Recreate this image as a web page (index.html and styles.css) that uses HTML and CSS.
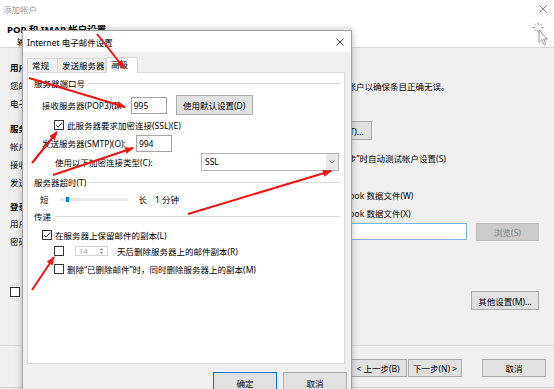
FILE: index.html
```html
<!DOCTYPE html>
<html lang="zh-CN">
<head>
    <meta charset="UTF-8">
    <meta name="viewport" content="width=device-width, initial-scale=1.0">
    <title>添加帐户</title>
    <link rel="stylesheet" href="styles.css">
</head>
<body>
    <div class="window">
        <div class="header">
            <div class="win-title">
                <span>添加帐户</span>
                <svg class="win-close" width="8" height="8" viewBox="0 0 8 8"><path d="M0.5 0.5 L7.5 7.5 M7.5 0.5 L0.5 7.5" stroke="#8a8a8a" stroke-width="1"/></svg>
            </div>
            <h1>POP 和 IMAP 帐户设置</h1>
            <p class="subtitle">输入帐户的邮件服务器设置。</p>
            <svg class="busy-cursor" width="16" height="24" viewBox="0 0 16 24">
                <g stroke="#9a9a9a" stroke-width="1">
                    <path d="M6 0.5 V3 M6 8 V10.5 M0.5 5.5 H3 M9 5.5 H11.5 M2.2 1.7 L3.9 3.4 M8.1 7.6 L9.8 9.3 M9.8 1.7 L8.1 3.4 M3.9 7.6 L2.2 9.3"/>
                </g>
                <path d="M7 8 L7 20.5 L9.8 17.8 L12 22.6 L13.8 21.8 L11.6 17.1 L15.3 17.1 Z" fill="#fff" stroke="#8a8a8a" stroke-width="0.9"/>
            </svg>
        </div>

        <div class="content">
            <div class="col-left">
                <div class="sec-title">用户信息</div>
                <div class="row">您的姓名(Y):</div>
                <div class="row">电子邮件地址(E):</div>
                <div class="sec-title gap">服务器信息</div>
                <div class="row">帐户类型(A):</div>
                <div class="row">接收邮件服务器(I):</div>
                <div class="row">发送邮件服务器(SMTP)(O):</div>
                <div class="sec-title gap short">登录信息</div>
                <div class="row">用户名(U):</div>
                <div class="row">密码(P):</div>
                <div class="row check-row remember">
                    <span class="cb"></span>
                    <span class="cb-label">记住密码(R)</span>
                </div>
            </div>

            <div class="col-right">
                <div class="sec-title">测试帐户设置</div>
                <div class="row hint">建议您测试您的帐户以确保条目正确无误。</div>
                <button class="btn test-btn">测试帐户设置(T)...</button>
                <div class="row check-row auto-test">
                    <span class="cb checked"><svg width="8" height="8" viewBox="0 0 8 8"><path d="M1 4.2 L3.1 6.2 L7 1.6" fill="none" stroke="#222" stroke-width="1"/></svg></span>
                    <span class="cb-label">单击“下一步”时自动测试帐户设置(S)</span>
                </div>
                <div class="row">将新邮件传递到:</div>
                <div class="row radio-row first">
                    <span class="radio"></span>
                    <span class="cb-label">新的 Outlook 数据文件(W)</span>
                </div>
                <div class="row radio-row">
                    <span class="radio"></span>
                    <span class="cb-label">现有 Outlook 数据文件(X)</span>
                </div>
                <div class="file-row">
                    <span class="file-input"></span>
                    <button class="btn disabled browse-btn">浏览(S)</button>
                </div>
                <button class="btn more-btn">其他设置(M)...</button>
            </div>
        </div>

        <div class="footer">
            <button class="btn back-btn">&lt; 上一步(B)</button>
            <button class="btn next-btn">下一步(N) &gt;</button>
            <button class="btn cancel-btn">取消</button>
        </div>
    </div>

    <div class="dialog">
        <div class="dlg-title">
            <span>Internet 电子邮件设置</span>
            <svg width="8" height="8" viewBox="0 0 8 8"><path d="M0.5 0.5 L7.5 7.5 M7.5 0.5 L0.5 7.5" stroke="#333" stroke-width="0.9"/></svg>
        </div>
        <div class="dlg-body">
            <div class="tabs">
                <div class="tab tab-general">常规</div>
                <div class="tab tab-outgoing">发送服务器</div>
                <div class="tab tab-advanced active">高级</div>
            </div>
            <div class="panel">
                <div class="group g-ports"><span>服务器端口号</span><i></i></div>

                <div class="prow pop-row">
                    <span>接收服务器(POP3)(I):</span>
                    <span class="field">995</span>
                    <button class="btn default-btn">使用默认设置(D)</button>
                </div>
                <div class="prow ssl-row">
                    <span class="cb checked"><svg width="8" height="8" viewBox="0 0 8 8"><path d="M1 4.2 L3.1 6.2 L7 1.6" fill="none" stroke="#222" stroke-width="1"/></svg></span>
                    <span class="cb-label">此服务器要求加密连接(SSL)(E)</span>
                </div>
                <div class="prow smtp-row">
                    <span>发送服务器(SMTP)(O):</span>
                    <span class="field">994</span>
                </div>
                <div class="prow enc-row">
                    <span>使用以下加密连接类型(C):</span>
                    <span class="select">
                        <span class="select-value">SSL</span>
                        <span class="select-arrow"><svg width="6" height="4" viewBox="0 0 6 4"><path d="M0.5 0.8 L3 3.2 L5.5 0.8" fill="none" stroke="#666" stroke-width="0.8"/></svg></span>
                    </span>
                </div>

                <div class="group g-timeout"><span>服务器超时(T)</span><i></i></div>
                <div class="prow slider-row">
                    <span>短</span>
                    <span class="track"><span class="thumb"></span></span>
                    <span class="long">长</span>
                    <span class="minutes">1 分钟</span>
                </div>

                <div class="group g-delivery"><span>传递</span><i></i></div>
                <div class="prow keep-row">
                    <span class="cb checked"><svg width="8" height="8" viewBox="0 0 8 8"><path d="M1 4.2 L3.1 6.2 L7 1.6" fill="none" stroke="#222" stroke-width="1"/></svg></span>
                    <span class="cb-label">在服务器上保留邮件的副本(L)</span>
                </div>
                <div class="prow remove-row">
                    <span class="cb"></span>
                    <span class="spinner">
                        <span>14</span>
                        <svg width="5" height="8" viewBox="0 0 5 8"><path d="M0.5 3 L2.5 1 L4.5 3 Z M0.5 5 L2.5 7 L4.5 5 Z" fill="#9a9a9a"/></svg>
                    </span>
                    <span class="days-label">天后删除服务器上的邮件副本(R)</span>
                </div>
                <div class="prow delete-row">
                    <span class="cb"></span>
                    <span class="cb-label">删除“已删除邮件”时，同时删除服务器上的副本(M)</span>
                </div>
            </div>
            <div class="dlg-buttons">
                <button class="btn dlg-btn primary">确定</button>
                <button class="btn dlg-btn">取消</button>
            </div>
        </div>
    </div>

    <!-- red annotation arrows drawn over the screenshot -->
    <svg class="arrows" width="554" height="389" viewBox="0 0 554 389">
        <defs>
            <marker id="head" markerWidth="9" markerHeight="7" refX="8" refY="3.5" orient="auto" markerUnits="userSpaceOnUse">
                <path d="M0 0 L9 3.5 L0 7 Z" fill="#f01414"/>
            </marker>
        </defs>
        <g stroke="#f01414" stroke-width="2" marker-end="url(#head)">
            <line x1="97" y1="34" x2="124" y2="68"/>
            <line x1="29" y1="78" x2="125" y2="107"/>
            <line x1="32" y1="163" x2="57" y2="132"/>
            <line x1="53" y1="175" x2="133" y2="148"/>
            <line x1="188" y1="214" x2="331" y2="171"/>
            <line x1="32" y1="290" x2="54" y2="257"/>
        </g>
    </svg>
</body>
</html>
```

FILE: styles.css
```css
body {
    margin: 0;
    width: 554px;
    height: 389px;
    overflow: hidden;
    position: relative;
    background-color: #f0f0f0;
    font-family: "Noto Sans", "Noto Sans CJK SC", sans-serif;
    font-size: 8.5px;
    color: #000;
}
button {
    font-family: inherit;
    font-size: 8.5px;
    color: #000;
}
.btn {
    background-color: #e1e1e1;
    border: 1px solid #adadad;
    padding: 0;
    margin: 0;
    white-space: nowrap;
}
.btn.disabled {
    background-color: #cccccc;
    border-color: #bfbfbf;
    color: #838383;
}

/* background window: 添加帐户 */
.window {
    width: 554px;
    height: 389px;
}
.header {
    position: relative;
    height: 47px;
    background-color: #ffffff;
    border-bottom: 1px solid #d6d6d6;
}
.win-title {
    display: flex;
    justify-content: space-between;
    align-items: center;
    height: 17px;
    padding: 0 7px 0 3px;
    color: #9a9a9a;
}
.header h1 {
    margin: 7px 0 0 7px;
    font-size: 9.5px;
    line-height: 12px;
    font-weight: bold;
}
.subtitle {
    margin: 0 0 0 17px;
    line-height: 12px;
}
.busy-cursor {
    position: absolute;
    right: 6px;
    top: 22px;
}
.content {
    display: flex;
    height: 297px;
    padding: 0 14px 0 10px;
}
.col-left {
    width: 278px;
    padding-top: 11px;
}
.col-right {
    flex: 1;
    display: flex;
    flex-direction: column;
    align-items: flex-start;
    padding-top: 11px;
}
.sec-title {
    height: 18px;
    line-height: 18px;
    font-weight: bold;
    white-space: nowrap;
}
.sec-title.gap {
    margin-top: 7px;
}
.sec-title.short {
    height: 16px;
    line-height: 16px;
}
.row {
    height: 18px;
    line-height: 18px;
    white-space: nowrap;
}
.check-row,
.radio-row {
    display: flex;
    align-items: center;
}
.remember {
    margin-top: 32px;
}
.cb {
    display: inline-flex;
    align-items: center;
    justify-content: center;
    box-sizing: border-box;
    width: 10px;
    height: 10px;
    border: 1px solid #333;
    background-color: #fff;
    flex: none;
}
.cb-label {
    margin-left: 3px;
    white-space: nowrap;
}
.radio {
    box-sizing: border-box;
    width: 10px;
    height: 10px;
    border: 1px solid #333;
    border-radius: 50%;
    background-color: #fff;
}
.hint {
    margin-top: 1px;
}
.test-btn {
    margin-top: 25px;
    height: 19px;
    padding: 0 7px;
}
.auto-test {
    margin-top: 10px;
    margin-left: 10px;
}
.radio-row {
    margin-left: 12px;
}
.radio-row.first {
    margin-top: 1px;
}
.file-row {
    display: flex;
    align-items: flex-start;
    margin-left: 12px;
}
.file-input {
    box-sizing: border-box;
    width: 167px;
    height: 17px;
    border: 1px solid #7eb4ea;
    background-color: #fff;
}
.browse-btn {
    width: 63px;
    height: 18px;
    margin-left: 9px;
}
.more-btn {
    align-self: flex-end;
    width: 68px;
    height: 19px;
    margin-top: 50px;
    margin-right: 1px;
}
.footer {
    display: flex;
    box-sizing: border-box;
    height: 43px;
    padding: 13px 8px 0 0;
    justify-content: flex-end;
    align-items: flex-start;
    border-top: 1px solid #dcdcdc;
    border-bottom: 1px solid #cfcfcf;
}
.footer .btn {
    height: 18px;
}
.back-btn {
    width: 58px;
}
.next-btn {
    width: 54px;
    margin-left: 1px;
}
.cancel-btn {
    width: 64px;
    margin-left: 20px;
}

/* foreground dialog: Internet 电子邮件设置 */
.dialog {
    position: absolute;
    left: 22px;
    top: 30px;
    width: 328px;
    height: 380px;
    border: 1px solid #a3a3a3;
    background-color: #f0f0f0;
    box-shadow: 0 0 7px rgba(0, 0, 0, 0.28);
}
.dlg-title {
    display: flex;
    justify-content: space-between;
    align-items: center;
    height: 21px;
    padding: 0 7px 0 4px;
    background-color: #fff;
}
.dlg-body {
    padding: 5px 6px 0 4px;
}
.tabs {
    display: flex;
    align-items: flex-end;
    height: 15px;
}
.tab {
    box-sizing: border-box;
    height: 14px;
    line-height: 13px;
    padding-left: 4px;
    border: 1px solid #d9d9d9;
    border-bottom: none;
    background-color: #f0f0f0;
    white-space: nowrap;
}
.tab + .tab {
    border-left: none;
}
.tab-general {
    width: 31px;
}
.tab-outgoing {
    width: 48px;
}
.tab-advanced {
    width: 32px;
}
.tab.active {
    height: 16px;
    margin-bottom: -1px;
    position: relative;
    background-color: #fff;
    border-left: 1px solid #d9d9d9;
}
.panel {
    height: 290px;
    border: 1px solid #d9d9d9;
    background-color: #fff;
}
.group {
    display: flex;
    align-items: center;
    height: 14px;
    padding: 0 4px 0 6px;
    white-space: nowrap;
}
.group i {
    flex: 1;
    height: 1px;
    margin-left: 3px;
    background-color: #dcdcdc;
}
.g-ports {
    margin-top: 3px;
}
.g-timeout {
    margin-top: 4px;
}
.g-delivery {
    margin-top: 3px;
}
.prow {
    display: flex;
    align-items: center;
    white-space: nowrap;
}
.field {
    box-sizing: border-box;
    width: 36px;
    height: 17px;
    line-height: 15px;
    margin-left: 9px;
    padding-left: 2px;
    border: 1px solid #a5a5a5;
    background-color: #fff;
}
.pop-row {
    height: 20px;
    margin-top: 5px;
    padding-left: 14px;
}
.default-btn {
    width: 77px;
    height: 20px;
    margin-left: 9px;
}
.ssl-row {
    height: 14px;
    margin-top: 3px;
    padding-left: 26px;
}
.smtp-row {
    height: 18px;
    margin-top: 2px;
    padding-left: 14px;
}
.smtp-row .field {
    margin-left: 10px;
}
.enc-row {
    height: 18px;
    margin-top: 1px;
    padding: 0 5px 0 27px;
}
.select {
    display: flex;
    box-sizing: border-box;
    width: 138px;
    height: 18px;
    margin-left: auto;
    border: 1px solid #b4b4b4;
    background-color: #fff;
}
.select-value {
    flex: 1;
    line-height: 16px;
    padding-left: 3px;
}
.select-arrow {
    display: flex;
    align-items: center;
    justify-content: center;
    width: 12px;
    background-color: #e8e8e8;
}
.slider-row {
    height: 14px;
    margin-top: 3px;
    padding-left: 12px;
}
.track {
    position: relative;
    width: 68px;
    height: 3px;
    margin-left: 11px;
    background-color: #e7e7e7;
}
.thumb {
    position: absolute;
    left: 6px;
    top: -1px;
    width: 3px;
    height: 5px;
    background-color: #0078d7;
}
.long {
    margin-left: 11px;
}
.minutes {
    margin-left: 8px;
}
.keep-row {
    height: 14px;
    margin-top: 5px;
    padding-left: 14px;
}
.remove-row {
    height: 14px;
    margin-top: 2px;
    padding-left: 26px;
}
.spinner {
    display: flex;
    align-items: center;
    justify-content: space-between;
    box-sizing: border-box;
    width: 33px;
    height: 10px;
    margin-left: 11px;
    padding: 0 3px;
    border: 1px solid #d4d4d4;
    color: #a0a0a0;
    font-size: 7.5px;
}
.days-label {
    margin-left: 9px;
}
.delete-row {
    height: 14px;
    margin-top: 4px;
    padding-left: 26px;
}
.dlg-buttons {
    display: flex;
    justify-content: flex-end;
    gap: 6px;
    margin-right: -2px;
    padding-top: 8px;
}
.dlg-btn {
    width: 64px;
    height: 21px;
}
.dlg-btn.primary {
    border-color: #0078d7;
}

.arrows {
    position: absolute;
    left: 0;
    top: 0;
    pointer-events: none;
}
```
